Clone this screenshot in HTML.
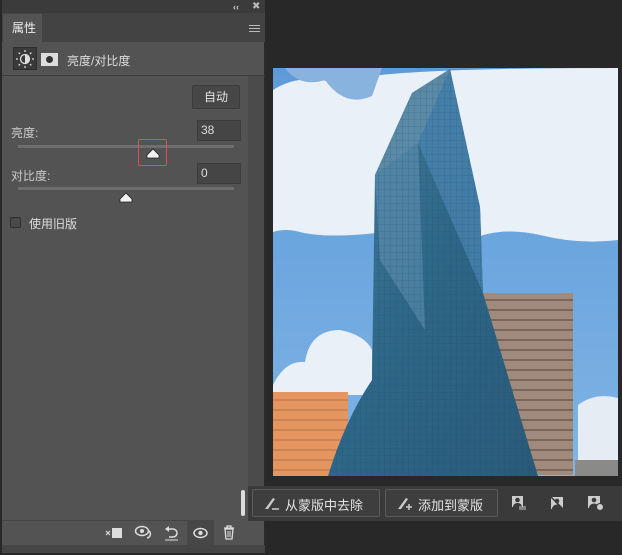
<!DOCTYPE html>
<html><head><meta charset="utf-8"><style>
*{margin:0;padding:0;box-sizing:border-box}
body{width:622px;height:555px;background:#282828;position:relative;overflow:hidden;font-family:"Liberation Sans","Noto Sans CJK SC",sans-serif;color:#d8d8d8;font-size:12px}
.a{position:absolute}
</style></head><body>
<!-- panel -->
<div class="a" style="left:2px;top:0;width:263px;height:553px;background:#535353;border-right:1px solid #2a2a2a"></div>
<div class="a" style="left:2px;top:0;width:263px;height:13px;background:#3b3b3b"></div>
<div class="a" style="left:233px;top:2px;font-size:9px;color:#ccc;font-weight:bold">‹‹</div>
<div class="a" style="left:252px;top:1px;font-size:10px;color:#bbb">✖</div>
<div class="a" style="left:2px;top:13px;width:263px;height:29px;background:#434343"></div>
<div class="a" style="left:3px;top:14px;width:39px;height:28px;background:#535353;color:#eee;font-size:12px;padding:5px 0 0 9px">属性</div>
<div class="a" style="left:249px;top:25px;width:11px;height:1px;background:#bbb;box-shadow:0 3px #bbb,0 6px #bbb"></div>
<!-- header -->
<div class="a" style="left:13px;top:47px;width:24px;height:23px;background:#3a3a3a;border:1px solid #2e2e2e"></div>
<svg class="a" style="left:14px;top:48px" width="22" height="22" viewBox="0 0 22 22"><circle cx="11" cy="11" r="4.5" fill="none" stroke="#ddd" stroke-width="1.3"/><path d="M11 6.5a4.5 4.5 0 0 1 0 9z" fill="#ddd"/><g stroke="#ddd" stroke-width="1.2"><path d="M11 2v2M11 18v2M2 11h2M18 11h2M4.6 4.6l1.4 1.4M16 16l1.4 1.4M4.6 17.4l1.4-1.4M16 6l1.4-1.4"/></g></svg>
<div class="a" style="left:41px;top:53px;width:17px;height:13px;background:#ddd"></div>
<div class="a" style="left:46px;top:56px;width:7px;height:7px;border-radius:50%;background:#333"></div>
<div class="a" style="left:67px;top:52px;font-size:12px;color:#ddd">亮度/对比度</div>
<div class="a" style="left:2px;top:75px;width:263px;height:1px;background:#3e3e3e"></div>
<div class="a" style="left:248px;top:76px;width:16px;height:444px;background:#4b4b4b"></div>
<!-- controls -->
<div class="a" style="left:192px;top:85px;width:48px;height:24px;background:#474747;border:1px solid #3c3c3c;border-radius:2px;color:#e4e4e4;text-align:center;line-height:22px">自动</div>
<div class="a" style="left:11px;top:124px;color:#ccc">亮度:</div>
<div class="a" style="left:197px;top:120px;width:44px;height:21px;background:#454545;border:1px solid #3c3c3c;color:#ddd;padding:2px 0 0 3px">38</div>
<div class="a" style="left:18px;top:145px;width:216px;height:3px;background:#6e6e6e"></div>
<div class="a" style="left:138px;top:139px;width:29px;height:27px;border:1.5px solid #e8485a;border-radius:2px"></div>
<svg class="a" style="left:146px;top:147px" width="14" height="12"><path d="M1 11V8L7 2l6 6v3z" fill="#f2f2f2" stroke="#222" stroke-width="0.8"/></svg>
<div class="a" style="left:11px;top:167px;color:#ccc">对比度:</div>
<div class="a" style="left:197px;top:163px;width:44px;height:21px;background:#454545;border:1px solid #3c3c3c;color:#ddd;padding:2px 0 0 3px">0</div>
<div class="a" style="left:18px;top:187px;width:216px;height:3px;background:#6e6e6e"></div>
<svg class="a" style="left:119px;top:191px" width="14" height="12"><path d="M1 11V8L7 2l6 6v3z" fill="#f2f2f2" stroke="#222" stroke-width="0.8"/></svg>
<div class="a" style="left:10px;top:217px;width:11px;height:11px;border:1px solid #2f2f2f;background:#4a4a4a;border-radius:2px"></div>
<div class="a" style="left:29px;top:215px;color:#ddd">使用旧版</div>
<!-- bottom toolbar -->
<div class="a" style="left:2px;top:520px;width:200px;height:1px;background:#444"></div>
<div class="a" style="left:187px;top:520px;width:27px;height:25px;background:#474747"></div>
<svg class="a" style="left:104px;top:526px" width="20" height="14"><path d="M2 5l4 4M6 5l-4 4" stroke="#ddd" stroke-width="1.2"/><rect x="8" y="2" width="10" height="10" fill="#ddd"/></svg>
<svg class="a" style="left:134px;top:525px" width="20" height="15"><ellipse cx="8" cy="6" rx="6.5" ry="4.5" fill="none" stroke="#ddd" stroke-width="1.5"/><circle cx="8" cy="6" r="2" fill="#ddd"/><path d="M15 6a4 4 0 0 1-2 7" fill="none" stroke="#ddd" stroke-width="1.5"/></svg>
<svg class="a" style="left:164px;top:525px" width="15" height="16"><path d="M4 4h5a4 4 0 0 1 0 8H5" fill="none" stroke="#ddd" stroke-width="1.5"/><path d="M1 4l4-3v6z" fill="#ddd"/><path d="M1 15h13" stroke="#ddd"/></svg>
<svg class="a" style="left:193px;top:527px" width="15" height="12"><ellipse cx="7.5" cy="6" rx="6.5" ry="4.5" fill="none" stroke="#ddd" stroke-width="1.5"/><circle cx="7.5" cy="6" r="2.2" fill="#ddd"/></svg>
<svg class="a" style="left:223px;top:525px" width="12" height="15"><path d="M1 3h10M4 3V1h4v2M2 4l1 10h6l1-10z" fill="none" stroke="#ddd" stroke-width="1.3"/><path d="M5 6v6M7 6v6" stroke="#ddd"/></svg>
<div class="a" style="left:2px;top:545px;width:263px;height:8px;background:#454545"></div>
<!-- image -->
<svg class="a" style="left:273px;top:68px" width="345" height="408" viewBox="273 68 345 408">
<defs><linearGradient id="sky" x1="0" y1="0" x2="0" y2="1"><stop offset="0" stop-color="#5d9ad8"/><stop offset="1" stop-color="#7fb5e6"/></linearGradient>
<linearGradient id="tw" x1="0" y1="0" x2="1" y2="1"><stop offset="0" stop-color="#4a7f9f"/><stop offset=".5" stop-color="#2e6688"/><stop offset="1" stop-color="#2a5a78"/></linearGradient>
<pattern id="grid" width="6" height="7" patternUnits="userSpaceOnUse"><path d="M0 0H6M0 0V7" stroke="#1c4460" stroke-width="0.6" opacity=".5"/></pattern></defs>
<rect x="273" y="68" width="345" height="408" fill="url(#sky)"/>
<path d="M273 90 Q300 72 340 84 Q360 68 618 68 V240 Q580 245 540 235 Q500 226 470 240 Q430 232 400 230 Q330 240 300 232 Q285 228 273 232Z" fill="#e9f0f7"/>
<path d="M285 68 Q300 88 325 80 Q345 108 372 96 L382 68Z" fill="#88b3df"/>
<path d="M273 385 Q285 360 305 362 Q310 330 340 330 Q365 335 372 350 L372 395 L273 395Z" fill="#e9f0f7"/>
<path d="M578 405 Q595 392 618 398 V460 H578Z" fill="#e5ecf3"/>
<rect x="483" y="293" width="90" height="182" fill="#a08a7c"/>
<g stroke="#5b4438" stroke-width="1.5" opacity=".7"><path d="M483 300H573M483 310H573M483 320H573M483 330H573M483 340H573M483 350H573M483 360H573M483 370H573M483 380H573M483 390H573M483 400H573M483 410H573M483 420H573M483 430H573M483 440H573M483 450H573M483 460H573M483 470H573"/></g>
<rect x="273" y="392" width="75" height="84" fill="#e49560"/>
<g stroke="#9a5a38" stroke-width="1" opacity=".6"><path d="M273 400H348M273 410H348M273 420H348M273 430H348M273 440H348M273 450H348M273 460H348M273 470H348"/></g>
<path d="M450 69 L412 93 L375 175 L372 380 Q345 420 328 476 L538 476 L483 293 L480 207Z" fill="url(#tw)"/>
<path d="M450 69 L418 143 L483 293 L480 207Z" fill="#4a86b2" opacity=".7"/>
<path d="M412 93 L450 69 L418 143 L375 175Z" fill="#5a8aa6"/>
<path d="M375 175 L418 143 L425 330 L380 260Z" fill="#6d9bbb" opacity=".45"/>
<path d="M450 69 L412 93 L375 175 L372 380 Q345 420 328 476 L538 476 L483 293 L480 207Z" fill="url(#grid)"/>
<rect x="575" y="460" width="43" height="16" fill="#8a8a88"/>
</svg>
<!-- mask bar -->
<div class="a" style="left:248px;top:486px;width:374px;height:35px;background:#3a3a3a"></div>
<div class="a" style="left:241px;top:490px;width:4px;height:26px;background:#ddd;border-radius:2px"></div>
<div class="a" style="left:252px;top:489px;width:128px;height:28px;border:1px solid #5a5a5a;background:#3e3e3e;border-radius:2px;color:#e4e4e4;font-size:13px;padding:5px 0 0 32px">从蒙版中去除</div>
<div class="a" style="left:385px;top:489px;width:113px;height:28px;border:1px solid #5a5a5a;background:#3e3e3e;border-radius:2px;color:#e4e4e4;font-size:13px;padding:5px 0 0 32px">添加到蒙版</div>
<svg class="a" style="left:263px;top:495px" width="18" height="16"><path d="M2 14L10 3l2 1-7 10z" fill="#ccc"/><path d="M9 14h7" stroke="#ccc" stroke-width="1.5"/></svg>
<svg class="a" style="left:396px;top:495px" width="18" height="16"><path d="M2 14L10 3l2 1-7 10z" fill="#ccc"/><path d="M10 12h6M13 9v6" stroke="#ccc" stroke-width="1.5"/></svg>
<svg class="a" style="left:511px;top:495px" width="16" height="16"><rect x="1" y="1" width="11" height="11" fill="#ccc"/><circle cx="6.5" cy="5" r="2.3" fill="#3a3a3a"/><path d="M2 12a4.5 4 0 0 1 9 0z" fill="#3a3a3a"/><path d="M8 12h7M8 14h7" stroke="#ccc"/></svg>
<svg class="a" style="left:549px;top:495px" width="16" height="16"><rect x="2" y="2" width="12" height="12" fill="#ccc"/><circle cx="8" cy="6" r="2.3" fill="#3a3a3a"/><path d="M3 14a5 4.5 0 0 1 10 0z" fill="#3a3a3a"/><path d="M1 1l14 14" stroke="#3a3a3a" stroke-width="1.5"/></svg>
<svg class="a" style="left:587px;top:495px" width="18" height="17"><rect x="1" y="1" width="12" height="12" fill="#ccc"/><circle cx="7" cy="5" r="2.3" fill="#3a3a3a"/><path d="M2 13a5 4.5 0 0 1 10 0z" fill="#3a3a3a"/><circle cx="13" cy="12" r="3.5" fill="#ccc" stroke="#3a3a3a"/></svg>
</body></html>
